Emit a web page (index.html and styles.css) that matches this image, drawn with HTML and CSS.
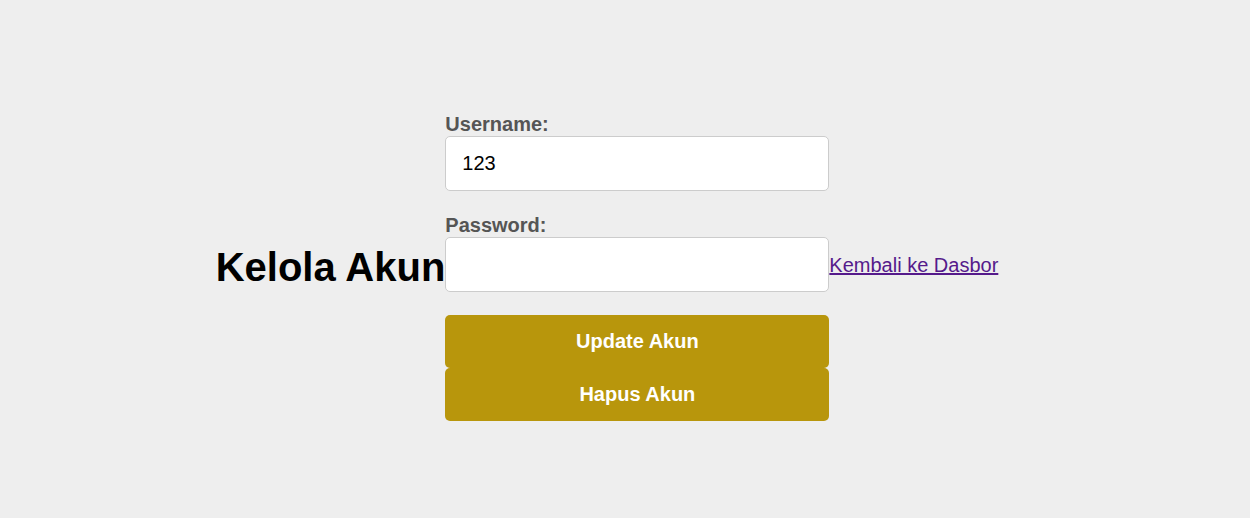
FILE: index.html
```html
<!DOCTYPE html>
<html lang="id">
<head>
<meta charset="utf-8">
<title>Kelola Akun</title>
<link rel="stylesheet" href="styles.css">
</head>
<body>
<h2 class="title">Kelola Akun</h2>
<form class="account-form">
  <label class="field-label" for="username">Username:</label>
  <input class="field-input" type="text" id="username" value="123">
  <label class="field-label" for="password">Password:</label>
  <input class="field-input" type="password" id="password">
  <button class="btn" type="button">Update Akun</button>
  <button class="btn" type="button">Hapus Akun</button>
</form>
<a class="back-link" href="#">Kembali ke Dasbor</a>
</body>
</html>
```
FILE: styles.css
```css
html, body {
  background: #eeeeee;
}
body {
  margin: 8px;
  height: 100vh;
  display: flex;
  justify-content: center;
  align-items: center;
  font-family: "Liberation Sans", Arial, sans-serif;
}
.title {
  font-size: 40px;
  font-weight: bold;
  color: #000;
  margin: 0;
}
.account-form {
  width: 384px;
  display: flex;
  flex-direction: column;
}
.field-label {
  font-size: 20px;
  font-weight: bold;
  color: #555555;
  line-height: 23px;
}
.field-input {
  box-sizing: border-box;
  width: 100%;
  height: 55px;
  padding: 0 16px;
  margin: 0 0 23px 0;
  border: 1px solid #cccccc;
  border-radius: 5px;
  background: #ffffff;
  font-family: "Liberation Sans", Arial, sans-serif;
  font-size: 20px;
  color: #000;
}
.btn {
  box-sizing: border-box;
  width: 100%;
  height: 53px;
  border: none;
  border-radius: 5px;
  background: #b8960c;
  color: #ffffff;
  font-family: "Liberation Sans", Arial, sans-serif;
  font-size: 20px;
  font-weight: bold;
  padding: 0;
}
.back-link {
  font-size: 20px;
  color: #551a8b;
  text-decoration: underline;
  margin-right: 36px;
  margin-bottom: 3px;
}
```
